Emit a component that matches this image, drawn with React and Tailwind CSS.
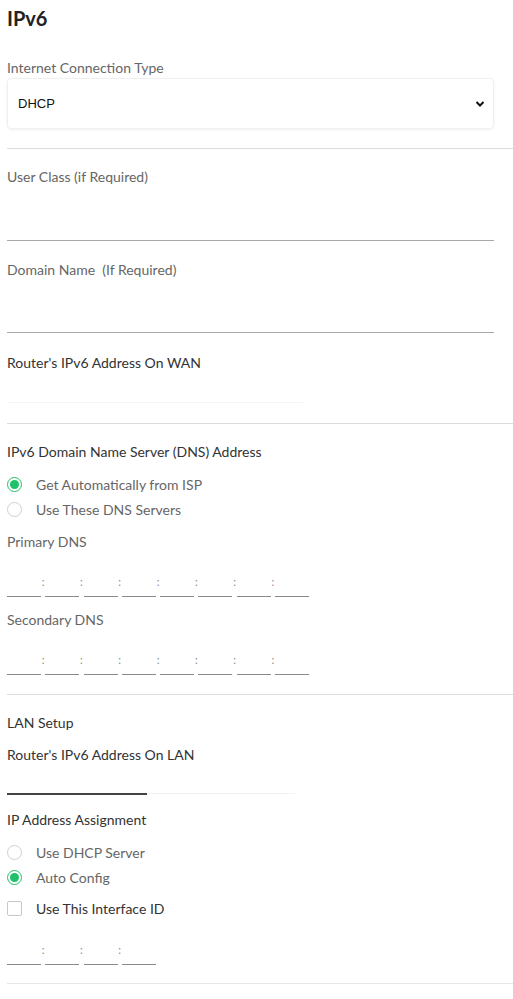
import { useState } from "react";

const font = { fontFamily: "Lato, 'Noto Sans', sans-serif" };

function Label({ children, dark, className = "" }) {
  return (
    <div
      className={`h-[20px] text-[14px] leading-[20px] ${
        dark ? "text-[#333]" : "text-[#666]"
      } ${className}`}
    >
      {children}
    </div>
  );
}

function Divider({ className = "" }) {
  return <div className={`h-px bg-[#dcdcdc] ${className}`} />;
}

function Radio({ checked, label, onClick }) {
  return (
    <label
      className="flex h-[25px] cursor-pointer items-center"
      onClick={onClick}
    >
      <span
        className={`flex h-[15px] w-[15px] items-center justify-center rounded-full border ${
          checked ? "border-[#1fc16b]" : "border-[#cfcfcf]"
        }`}
      >
        {checked && <span className="h-[9px] w-[9px] rounded-full bg-[#1fc16b]" />}
      </span>
      <span className="ml-[14px] text-[14px] text-[#666]">{label}</span>
    </label>
  );
}

function Segments({ count }) {
  const items = [];
  for (let i = 0; i < count; i++) {
    if (i > 0) {
      items.push(
        <span
          key={`c${i}`}
          className="flex w-[4.3px] items-end justify-center pb-[10px] text-[11px] leading-none text-[#888]"
        >
          :
        </span>
      );
    }
    items.push(
      <input
        key={`s${i}`}
        className="h-[45px] w-[34px] border-b border-[#8a8a8a] bg-transparent text-[13px] outline-none"
      />
    );
  }
  return <div className="flex">{items}</div>;
}

export default function App() {
  const [dns, setDns] = useState("auto");
  const [assign, setAssign] = useState("auto");
  const [useId, setUseId] = useState(false);

  return (
    <div className="min-h-[999px] bg-white pl-[7px]" style={font}>
      {/* Header */}
      <h1 className="h-[32px] pt-[4px] text-[20px] font-bold leading-[28px] text-[#222]">
        IPv6
      </h1>

      {/* Connection type */}
      <div className="pr-[19px]">
        <Label className="mt-[26px]">Internet Connection Type</Label>
        <div className="relative h-[51px] rounded-sm border border-[#f0f0f0] shadow-[0_1px_3px_rgba(0,0,0,0.06)]">
          <select
            className="h-full w-full appearance-none bg-transparent pl-[10px] text-[13px] text-[#111] outline-none"
            style={{ fontFamily: "'Liberation Sans', Arial, sans-serif" }}
            defaultValue="DHCP"
          >
            <option>DHCP</option>
            <option>Fixed</option>
            <option>Auto Detect</option>
          </select>
          <svg
            className="pointer-events-none absolute right-[8px] top-[21px]"
            width="10"
            height="8"
            viewBox="0 0 10 8"
          >
            <path d="M1.5 2 L5 5.5 L8.5 2" fill="none" stroke="#111" strokeWidth="2" />
          </svg>
        </div>
      </div>

      <Divider className="mt-[19px]" />

      {/* User class / domain */}
      <div className="pr-[19px]">
        <Label className="mt-[18px]">User Class (if Required)</Label>
        <input className="block h-[54px] w-full border-b border-[#a8a8a8] bg-transparent text-[14px] outline-none" />
        <Label className="mt-[19px]">Domain Name&nbsp; (If Required)</Label>
        <input className="block h-[53px] w-full border-b border-[#a8a8a8] bg-transparent text-[14px] outline-none" />
      </div>

      <Label dark className="mt-[20px]">
        Router's IPv6 Address On WAN
      </Label>
      <div className="mt-[10px] h-[20px] w-[296px] border-b border-[#f4f4f4]" />

      <Divider className="mt-[20px]" />

      {/* DNS */}
      <Label dark className="mt-[18px]">
        IPv6 Domain Name Server (DNS) Address
      </Label>
      <div className="mt-[10px]">
        <Radio
          checked={dns === "auto"}
          label="Get Automatically from ISP"
          onClick={() => setDns("auto")}
        />
        <Radio
          checked={dns === "manual"}
          label="Use These DNS Servers"
          onClick={() => setDns("manual")}
        />
      </div>
      <Label className="mt-[10px]">Primary DNS</Label>
      <Segments count={8} />
      <Label className="mt-[13px]">Secondary DNS</Label>
      <Segments count={8} />

      <Divider className="mt-[19px]" />

      {/* LAN */}
      <Label dark className="mt-[18px]">
        LAN Setup
      </Label>
      <Label dark className="mt-[12px]">
        Router's IPv6 Address On LAN
      </Label>
      <div className="flex h-[29px] items-end">
        <div className="mb-[-1px] h-[14px] w-[140px] border-b-2 border-[#444]" />
        <div className="h-[14px] w-[148px] border-b border-[#f2f2f2]" />
      </div>

      <Label dark className="mt-[16px]">
        IP Address Assignment
      </Label>
      <div className="mt-[10px]">
        <Radio
          checked={assign === "dhcp"}
          label="Use DHCP Server"
          onClick={() => setAssign("dhcp")}
        />
        <Radio
          checked={assign === "auto"}
          label="Auto Config"
          onClick={() => setAssign("auto")}
        />
      </div>
      <label className="mt-[6px] flex h-[24px] cursor-pointer items-center">
        <input
          type="checkbox"
          checked={useId}
          onChange={(e) => setUseId(e.target.checked)}
          className="h-[15px] w-[15px] appearance-none rounded-[2px] border border-[#c8c8c8] checked:bg-[#1fc16b]"
        />
        <span className="ml-[14px] text-[14px] text-[#333]">Use This Interface ID</span>
      </label>
      <Segments count={4} />

      <Divider className="mt-[18px] bg-[#e6e6e6]" />
    </div>
  );
}
